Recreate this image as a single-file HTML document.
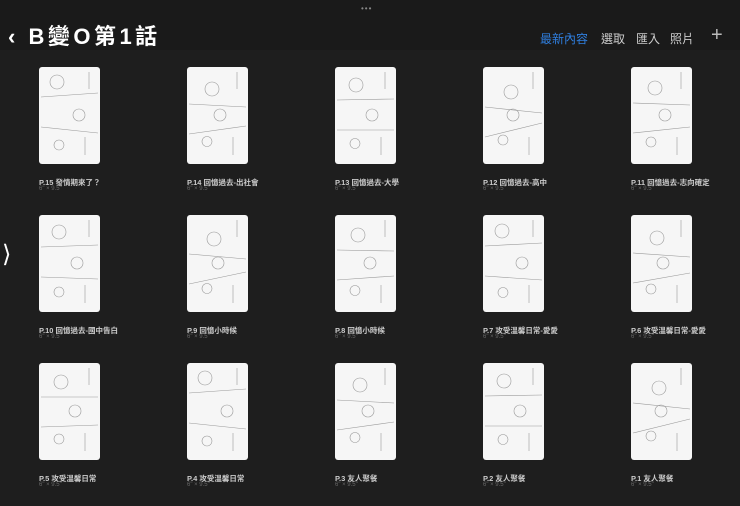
<!DOCTYPE html>
<html><head><meta charset="utf-8"><style>
body{margin:0;width:740px;height:506px;background:#1e1e1e;overflow:hidden;font-family:"Liberation Sans","Noto Sans CJK TC",sans-serif;position:relative}
.hdr{position:absolute;left:0;top:0;width:740px;height:50px;background:#1a1a1a}
.t{position:absolute;left:8px;top:19px;color:#fff;font-size:22px;font-weight:bold;letter-spacing:3.5px}
.r{position:absolute;top:30px;font-size:12px;color:#ccc}
.th{position:absolute;width:61px;height:97px;background:#f6f6f6;border-radius:3px;overflow:hidden}
.th svg{width:61px;height:97px}
.l{position:absolute;font-size:7.5px;color:#ccc;font-weight:bold;white-space:nowrap}
.s{position:absolute;font-size:6px;color:#666;white-space:nowrap}
</style></head><body>
<div class="hdr">
<div style="position:absolute;left:361px;top:4px;color:#888;font-size:8px;letter-spacing:1px">•••</div>
<div class="t">‹ B變O第1話</div>
<div class="r" style="left:540px;color:#2f7fe0">最新內容</div>
<div class="r" style="left:601px">選取</div>
<div class="r" style="left:636px">匯入</div>
<div class="r" style="left:670px">照片</div>
<div style="position:absolute;left:711px;top:24px;color:#bbb;font-size:20px;font-weight:200">+</div>
</div>
<div style="position:absolute;left:2px;top:240px;color:#fff;font-size:24px">⟩</div>
<div id="g"></div>
<script>
var L=["P.15 發情期來了？","P.14 回憶過去-出社會","P.13 回憶過去-大學","P.12 回憶過去-高中","P.11 回憶過去-志向確定","P.10 回憶過去-國中告白","P.9 回憶小時候","P.8 回憶小時候","P.7 攻受溫馨日常-愛愛","P.6 攻受溫馨日常-愛愛","P.5 攻受溫馨日常","P.4 攻受溫馨日常","P.3 友人聚餐","P.2 友人聚餐","P.1 友人聚餐"];
var h="";
for(var i=0;i<15;i++){var c=i%5,r=Math.floor(i/5),x=39+c*148,y=67+r*148;
var s='<svg viewBox="0 0 61 97"><g stroke="#999" stroke-width="0.6" fill="none">';
var a=(i*7)%11;
s+='<line x1="2" y1="'+(30+a)+'" x2="59" y2="'+(26+a*2)+'"/><line x1="2" y1="'+(60+a)+'" x2="59" y2="'+(66-a)+'"/>';
s+='<circle cx="'+(18+a)+'" cy="'+(15+a)+'" r="7"/><circle cx="'+(40-a)+'" cy="'+(48)+'" r="6"/><circle cx="20" cy="'+(78-a/2)+'" r="5"/>';
s+='<line x1="50" y1="5" x2="50" y2="22"/><line x1="46" y1="70" x2="46" y2="88"/></g></svg>';
h+='<div class="th" style="left:'+x+'px;top:'+y+'px">'+s+'</div>';
h+='<div class="l" style="left:'+x+'px;top:'+(y+110)+'px">'+L[i]+'</div>';
h+='<div class="s" style="left:'+x+'px;top:'+(y+119)+'px">6" × 9.5"</div>';}
document.getElementById("g").innerHTML=h;
</script>
</body></html>
